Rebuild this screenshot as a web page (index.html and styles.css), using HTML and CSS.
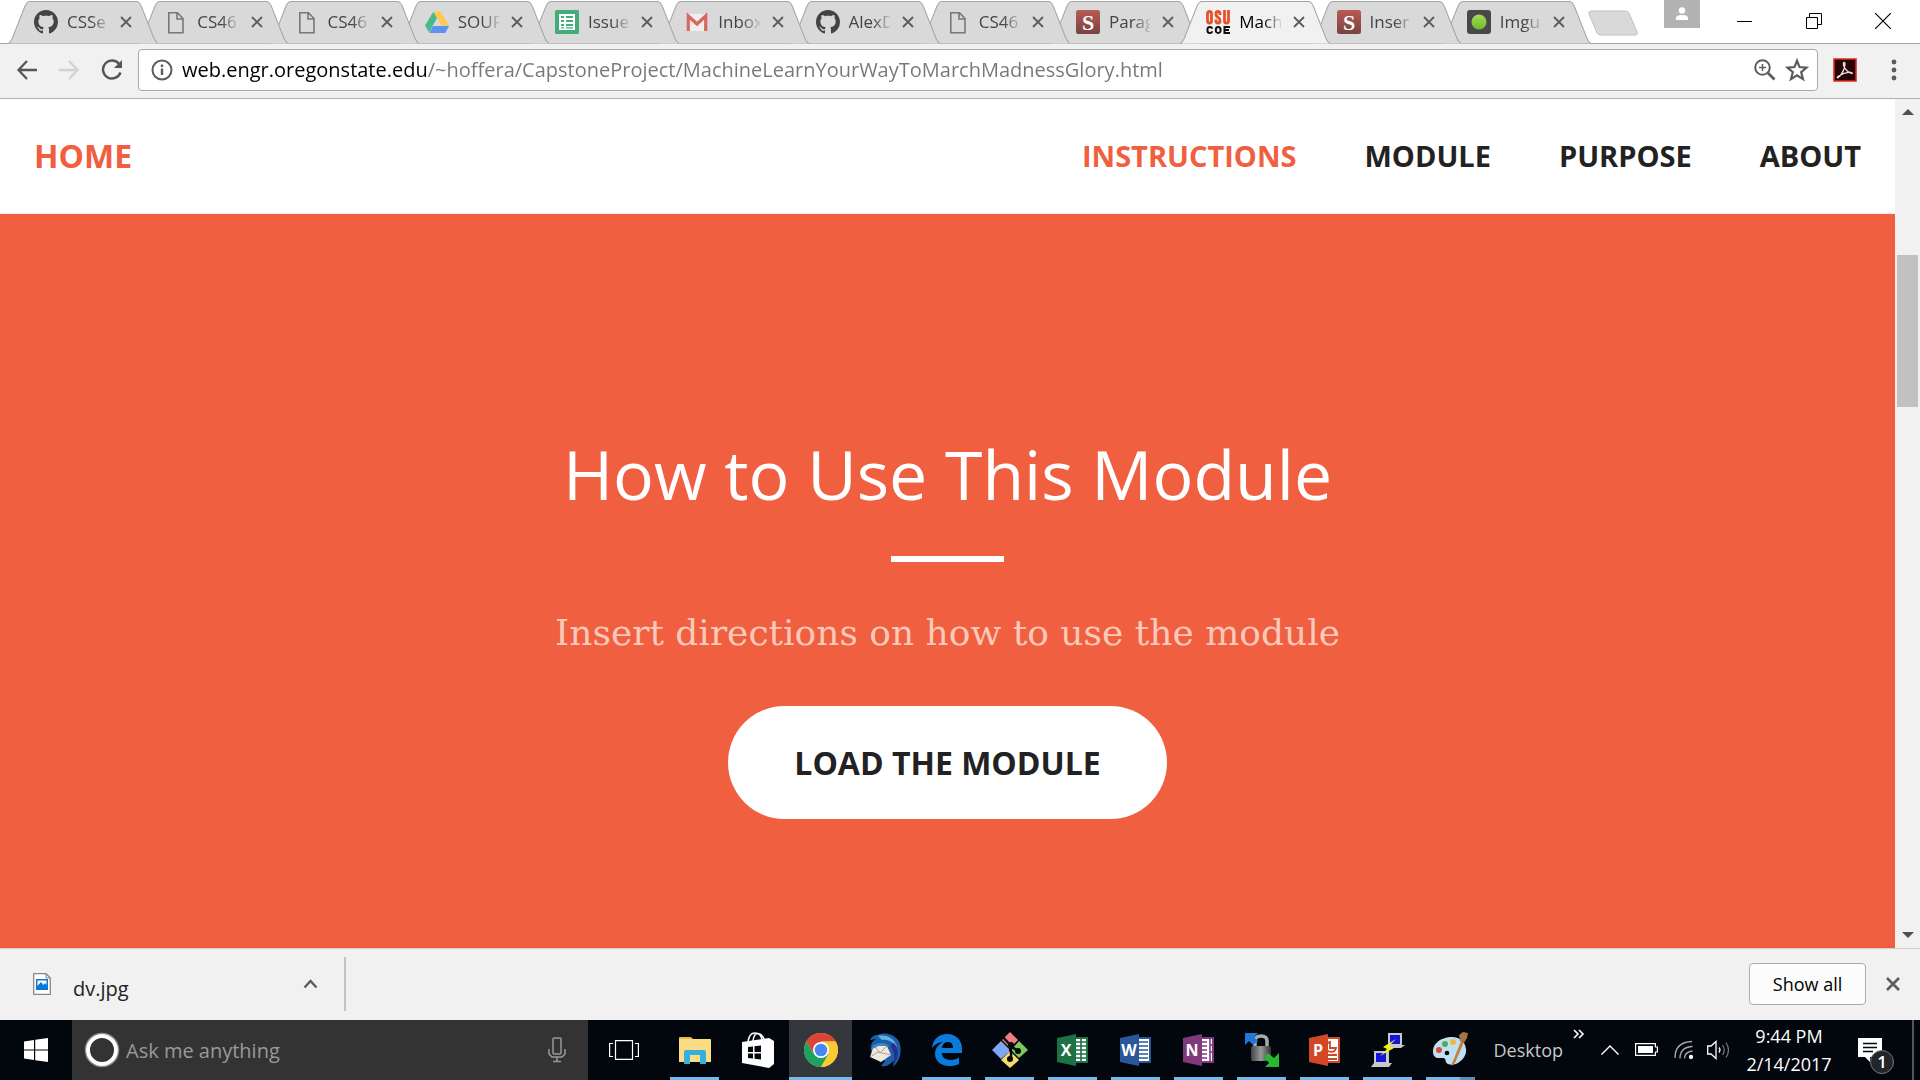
FILE: index.html
```html
<!DOCTYPE html>
<html lang="en">
<head>
<meta charset="utf-8">
<title>Machine Learn Your Way To March Madness Glory</title>
<link rel="stylesheet" href="styles.css">
</head>
<body>
<svg class="defs" aria-hidden="true">
  <symbol id="tab" viewBox="0 0 150 44" preserveAspectRatio="none"><path d="M0 43.500C2 43 3 41 4 39L17 6Q19 1.500 22 1.500H128Q131 1.500 133 6L146 39C147 41 148 43 150 43.500"/></symbol>
  <symbol id="close" viewBox="0 0 12 12"><path d="M1 1L11 11M11 1L1 11" fill="none" stroke="#5c5c5c" stroke-width="1.800"/></symbol>
  <symbol id="github" viewBox="0 0 16 16"><path fill="#444" d="M8 0C3.580 0 0 3.580 0 8c0 3.540 2.290 6.530 5.470 7.590.4.070.55-.17.55-.38 0-.19-.01-.82-.01-1.490-2.010.37-2.530-.49-2.690-.94-.09-.23-.48-.94-.82-1.130-.28-.15-.68-.52-.01-.53.63-.01 1.080.58 1.230.82.72 1.210 1.870.87 2.330.66.070-.52.28-.87.51-1.070-1.780-.2-3.640-.89-3.640-3.950 0-.87.31-1.590.82-2.150-.08-.2-.36-1.020.08-2.120 0 0 .67-.21 2.200.82.64-.18 1.320-.27 2-.27s1.360.09 2 .27c1.530-1.040 2.200-.82 2.200-.82.44 1.100.16 1.920.08 2.120.51.56.82 1.270.82 2.150 0 3.070-1.870 3.750-3.650 3.950.29.25.54.73.54 1.480 0 1.070-.01 1.930-.01 2.200 0 .21.15.46.55.38A8.010 8.010 0 0 0 16 8c0-4.420-3.580-8-8-8z"/></symbol>
  <symbol id="page" viewBox="0 0 24 24"><path d="M4.800 2.800H13.500L19 8.500V22.700H4.800ZM13 3V9H19" fill="none" stroke="#777" stroke-width="1.600"/></symbol>
  <symbol id="drive" viewBox="0 0 24 24"><path fill="#fdc94f" d="M8.500 1.500H15.500L24 15.500H16.500Z"/><path fill="#4cb98a" d="M8.300 1.700L12 8L4 22.500L0 15.500Z"/><path fill="#5b93ee" d="M8 16H24L20.300 23H4.200Z"/></symbol>
  <symbol id="sheet" viewBox="0 0 24 24"><rect width="24" height="24" rx="1.500" fill="#43ad78"/><path fill="#fff" d="M4 4H20V20H4Z"/><path fill="#43ad78" d="M6 6H9V8H6ZM11 6H18V8H11ZM6 10H9V12H6ZM11 10H18V12H11ZM6 14H9V16H6ZM11 14H18V16H11ZM6 17.300H9V18.600H6ZM11 17.300H18V18.600H11Z"/></symbol>
  <symbol id="gmail" viewBox="0 0 24 24"><path fill="#eee" d="M2 4H22V21H2Z"/><path d="M3.300 21V6L12 14L20.700 6V21" fill="none" stroke="#d9675f" stroke-width="3.200"/></symbol>
  <symbol id="scribd" viewBox="0 0 24 24"><linearGradient id="red" x2="0" y2="1"><stop stop-color="#b95a55"/><stop offset="1" stop-color="#754441"/></linearGradient><rect width="24" height="24" rx="2.500" fill="url(#red)"/><text x="12" y="19.500" text-anchor="middle" font-family="Liberation Serif, serif" font-weight="700" font-size="22" fill="#fff">S</text></symbol>
  <symbol id="imgur" viewBox="0 0 24 24"><linearGradient id="lime" x2="0" y2="1"><stop stop-color="#a2dc5a"/><stop offset="1" stop-color="#70bb28"/></linearGradient><rect width="24" height="24" rx="3" fill="#484848"/><circle cx="12" cy="12" r="7.500" fill="url(#lime)"/></symbol>
  <symbol id="osu" viewBox="0 0 24 24"><path d="M1.500 3.500Q1.500 1.500 3.500 1.500T5.500 3.500V11Q5.500 13 3.500 13T1.500 11ZM14 5V3.500Q14 1.500 12 1.500T10 3.500V4.500Q10 6 12 7.300T14 10V11Q14 13 12 13T10 11V9.500M18.500 0V11Q18.500 13 20.500 13T22.500 11V0" fill="none" stroke="#e8502a" stroke-width="2.800"/><path d="M6 18.800Q6 17 3.800 17T1.500 19V21Q1.500 23 3.800 23T6 21.200M9.800 20Q9.800 17 12.200 17T14.600 20T12.200 23T9.800 20ZM24 17H18.500V23H24M18.500 20H23" fill="none" stroke="#111" stroke-width="2"/></symbol>
  <symbol id="office-sheet" viewBox="0 0 32 32"><path d="M17 4H30V28H17Z" fill="#fff" stroke="currentColor" stroke-width="2"/><path d="M0 4L19 0V32L0 28Z" fill="currentColor"/></symbol>
</svg>

<header class="browser">
  <div class="strip">
    <nav class="tabs" aria-label="Open tabs">
      <a href="#" class="tab"><svg class="shape"><use href="#tab"/></svg><svg class="fav"><use href="#github"/></svg><span class="label">CSSe</span><svg class="x"><use href="#close"/></svg></a>
      <a href="#" class="tab"><svg class="shape"><use href="#tab"/></svg><svg class="fav"><use href="#page"/></svg><span class="label">CS46</span><svg class="x"><use href="#close"/></svg></a>
      <a href="#" class="tab"><svg class="shape"><use href="#tab"/></svg><svg class="fav"><use href="#page"/></svg><span class="label">CS46</span><svg class="x"><use href="#close"/></svg></a>
      <a href="#" class="tab"><svg class="shape"><use href="#tab"/></svg><svg class="fav"><use href="#drive"/></svg><span class="label">SOUR</span><svg class="x"><use href="#close"/></svg></a>
      <a href="#" class="tab"><svg class="shape"><use href="#tab"/></svg><svg class="fav"><use href="#sheet"/></svg><span class="label">Issue</span><svg class="x"><use href="#close"/></svg></a>
      <a href="#" class="tab"><svg class="shape"><use href="#tab"/></svg><svg class="fav"><use href="#gmail"/></svg><span class="label">Inbox</span><svg class="x"><use href="#close"/></svg></a>
      <a href="#" class="tab"><svg class="shape"><use href="#tab"/></svg><svg class="fav"><use href="#github"/></svg><span class="label">AlexD</span><svg class="x"><use href="#close"/></svg></a>
      <a href="#" class="tab"><svg class="shape"><use href="#tab"/></svg><svg class="fav"><use href="#page"/></svg><span class="label">CS46</span><svg class="x"><use href="#close"/></svg></a>
      <a href="#" class="tab"><svg class="shape"><use href="#tab"/></svg><svg class="fav"><use href="#scribd"/></svg><span class="label">Parag</span><svg class="x"><use href="#close"/></svg></a>
      <a href="#" class="tab active" aria-current="page"><svg class="shape"><use href="#tab"/></svg><svg class="fav"><use href="#osu"/></svg><span class="label">Mach</span><svg class="x"><use href="#close"/></svg></a>
      <a href="#" class="tab"><svg class="shape"><use href="#tab"/></svg><svg class="fav"><use href="#scribd"/></svg><span class="label">Inser</span><svg class="x"><use href="#close"/></svg></a>
      <a href="#" class="tab"><svg class="shape"><use href="#tab"/></svg><svg class="fav"><use href="#imgur"/></svg><span class="label">Imgu</span><svg class="x"><use href="#close"/></svg></a>
    </nav>
    <button class="new-tab" aria-label="New tab"><svg width="52" height="26" viewBox="0 0 52 26"><path d="M4 1H38Q41 1 42 3L50 22Q51 25 48 25H14Q11 25 10 23L2 4Q1 1 4 1Z" fill="#d9d9d9" stroke="#c2c2c2"/></svg></button>
    <div class="window-buttons">
      <button class="person" aria-label="Profile"><svg width="14" height="14" viewBox="0 0 14 14" fill="#fff"><circle cx="7" cy="3.500" r="3.200"/><path d="M1 13V11Q1 8 7 8T13 11V13Z"/></svg></button>
      <button class="win" aria-label="Minimize"><svg width="16" height="16"><path d="M0 8.500H15" stroke="#000"/></svg></button>
      <button class="win" aria-label="Restore"><svg width="16" height="16" fill="none" stroke="#000"><path d="M.5 4.500H11.500V15.500H.5ZM3.500 4V.5H15.500V11.500H12"/></svg></button>
      <button class="win" aria-label="Close"><svg width="16" height="16"><path d="M0 0L16 16M16 0L0 16" stroke="#000" stroke-width="1.200"/></svg></button>
    </div>
  </div>
  <div class="toolbar">
    <button aria-label="Back"><svg width="20" height="20" viewBox="0 0 20 20" fill="none" stroke="#555" stroke-width="2.300"><path d="M20 10H1.500M10 1L1.500 10L10 19"/></svg></button>
    <button aria-label="Forward"><svg width="20" height="20" viewBox="0 0 20 20" fill="none" stroke="#d2d2d2" stroke-width="2.300"><path d="M0 10H18.500M10 1L18.500 10L10 19"/></svg></button>
    <button aria-label="Reload"><svg width="22" height="22" viewBox="0 0 22 22"><path d="M18.500 5.500A9 9 0 1 0 19.500 13.500" fill="none" stroke="#555" stroke-width="2.400"/><path d="M21 1V9H13Z" fill="#555"/></svg></button>
    <form class="omnibox">
      <svg width="22" height="22" viewBox="0 0 22 22"><circle cx="11" cy="11" r="9.500" fill="none" stroke="#5c5c5c" stroke-width="2"/><path d="M11 9.500V16M11 5.500V8" stroke="#5c5c5c" stroke-width="2.400"/></svg>
      <input type="text" aria-label="Address" value="web.engr.oregonstate.edu/~hoffera/CapstoneProject/MachineLearnYourWayToMarchMadnessGlory.html">
      <svg width="22" height="22" viewBox="0 0 22 22" fill="none" stroke="#5c5c5c" stroke-width="2"><circle cx="8.500" cy="8.500" r="7.300"/><path d="M14 14L20.500 20.500" stroke-width="2.800"/><path d="M5 8.500H12M8.500 5V12" stroke-width="1.500"/></svg>
      <svg width="24" height="24" viewBox="0 0 22 22"><path d="M11 2.500L13.300 8.300L19.800 8.800L14.800 12.900L16.500 19.300L11 15.800L5.500 19.300L7.200 12.900L2.200 8.800L8.700 8.300Z" fill="none" stroke="#5c5c5c" stroke-width="2"/></svg>
    </form>
    <button class="acrobat" aria-label="Adobe Acrobat"><svg width="24" height="24" viewBox="0 0 24 24"><path d="M1 1H23V23H1Z" fill="#260406" stroke="#e02a20" stroke-width="1.600"/><path d="M5 19.500C8 18 12 11 12 6C12 3.500 10 4 10.500 7C11.500 11 16 15.500 19 15.500C20 14 13 13 5 18.500C4 19.500 4.500 20 5 19.500Z" fill="none" stroke="#e8dede" stroke-width="1.400"/></svg></button>
    <button class="more" aria-label="Menu"><svg width="6" height="22" fill="#5c5c5c"><circle cx="3" cy="3" r="2.400"/><circle cx="3" cy="11" r="2.400"/><circle cx="3" cy="19" r="2.400"/></svg></button>
  </div>
</header>

<div class="viewport">
  <main class="site">
    <header class="site-nav">
      <a class="brand" href="#home">HOME</a>
      <nav class="links" aria-label="Site">
        <a class="current" href="#instructions">INSTRUCTIONS</a>
        <a href="#module">MODULE</a>
        <a href="#purpose">PURPOSE</a>
        <a href="#about">ABOUT</a>
      </nav>
    </header>
    <section class="hero" id="instructions">
      <h1>How to Use This Module</h1>
      <hr>
      <p>Insert directions on how to use the module</p>
      <button class="load">LOAD THE MODULE</button>
    </section>
  </main>
  <div class="scrollbar" aria-hidden="true">
    <svg width="12" height="6"><path d="M0 6L6 0L12 6Z" fill="#505050"/></svg>
    <div class="track"><div class="thumb"></div></div>
    <svg width="12" height="6"><path d="M0 0L6 6L12 0Z" fill="#505050"/></svg>
  </div>
</div>

<aside class="shelf" aria-label="Downloads">
  <button class="download">
    <svg width="18" height="22" viewBox="0 0 18 22"><path d="M.7.7H13L17.300 5V21.300H.7Z" fill="#fff" stroke="#888" stroke-width="1.300"/><path d="M13 1V5H17" fill="none" stroke="#888"/><path d="M3 6H15V17H3Z" fill="#0a78d4"/><path d="M4.500 7.500H13.500V12L12 10L10.500 12L8 9L4.500 13Z" fill="#fff"/></svg>
    <span>dv.jpg</span>
    <svg class="caret" width="15" height="10"><path d="M1.500 8.500L7.500 2L13.500 8.500" fill="none" stroke="#5c5c5c" stroke-width="2.400"/></svg>
  </button>
  <button class="show-all">Show all</button>
  <button class="dismiss" aria-label="Close downloads"><svg width="14" height="14"><path d="M1 1L13 13M13 1L1 13" stroke="#5c5c5c" stroke-width="2.600"/></svg></button>
</aside>

<footer class="taskbar">
  <button class="start" aria-label="Start"><svg width="24" height="24" viewBox="0 0 24 24" fill="#fff"><path d="M0 3.400L10 2V11.400H0ZM11.200 1.800L24 0V11.400H11.200ZM0 12.600H10V22L0 20.600ZM11.200 12.600H24V24L11.200 22.200Z"/></svg></button>
  <label class="search">
    <svg width="36" height="36" viewBox="0 0 36 36"><circle cx="18" cy="18" r="16.500" fill="none" stroke="#8e8e8e" stroke-width="1.500"/><circle cx="18" cy="18" r="14" fill="none" stroke="#fff" stroke-width="4"/></svg>
    <input type="text" placeholder="Ask me anything" aria-label="Ask me anything">
    <svg width="18" height="26" viewBox="0 0 18 26" fill="none" stroke="#999" stroke-width="1.500"><rect x="5" y="1" width="8" height="16" rx="1"/><path d="M1 12V17L4 20H14L17 17V12M9 20V24M5 24.500H13"/></svg>
  </label>
  <button class="task-view" aria-label="Task view"><svg width="30" height="20" fill="none" stroke="#fff" stroke-width="1.200"><path d="M6.500.6H23.500V19.400H6.500ZM4 3.500H.6V16.500H4M26 3.500H29.400V16.500H26"/></svg></button>
  <div class="apps">
    <button class="app open" aria-label="File Explorer"><svg width="32" height="28" viewBox="0 0 32 28"><path d="M0 2Q0 1 1 1H12L15 4H0Z" fill="#e9b44a"/><path d="M0 3H31Q32 3 32 4V26H0Z" fill="#fbdc82"/><path d="M5 28V16Q5 14 7 14H25Q27 14 27 16V28H21V19H11V28Z" fill="#35aee0"/></svg></button>
    <button class="app" aria-label="Store"><svg width="32" height="36" viewBox="0 0 32 36"><path d="M6 10Q7 1 13 1T20 8M11 9Q12 1 16 1.500T22 7" fill="none" stroke="#fff" stroke-width="1.500"/><path d="M0 10L27 6L32 9V32L27 36L0 31Z" fill="#fff"/><path d="M6 15L11 14.500V20H6ZM12.500 14.300L19 13.500V20H12.500ZM6 21.500H11V26.500L6 26ZM12.500 21.500H19V27.500L12.500 26.700Z" fill="#02060d"/></svg></button>
    <button class="app open focused" aria-label="Chrome"><svg width="34" height="34" viewBox="0 0 34 34"><circle cx="17" cy="17" r="17" fill="#fbc931"/><path d="M2.300 8.500A17 17 0 0 1 31.700 8.500H17L10 21Z" fill="#db4437"/><path d="M2.300 8.500A17 17 0 0 0 17 34L24.500 21L9.800 21Z" fill="#1ca25e"/><path d="M31.700 8.500H17L24.500 21L17 34A17 17 0 0 0 31.700 8.500Z" fill="#fbc931"/><circle cx="17" cy="17" r="8" fill="#fff"/><circle cx="17" cy="17" r="6.300" fill="#4687f4"/></svg></button>
    <button class="app" aria-label="Thunderbird"><svg width="34" height="34" viewBox="0 0 34 34"><path d="M10 2C16-1 26 0 31 7C36 15 34 27 26 34C27 31 27 29 26 28C23 32 19 34 14 33L18 28L4 18C3 12 5 8 9 6L3 7C4 4 7 2 10 2Z" fill="#1c5fa8"/><path d="M11 3C20 1 28 6 30 14C26 9 21 6 15 7Z" fill="#63b1df"/><path d="M27 10C33 18 31 26 26 33C28 24 28 18 23 13Z" fill="#252f8c"/><path d="M7 12L20 13L24 22L14 29L3 24Z" fill="#eee9df"/><path d="M7 12L13 20L20 13M3 24L11 19L24 22" fill="none" stroke="#aaa092"/><path d="M4 16C8 9 17 8 24 14C18 12 12 12 8 15Z" fill="#3d86c6"/></svg></button>
    <button class="app open" aria-label="Edge"><svg width="30" height="32" viewBox="0 0 30 32"><path d="M0 14C1 5 7 0 15 0C25 0 30 7 30 15V19H10C10 24 14 26 19 26C22 26 25 25 27 23.500V30C24 31.500 21 32 17 32C9 32 3 27 3 20C3 14 7 10 11 8C7 8 3 10 0 14ZM10 14H21C21 10 19 8 16 8C13 8 10.500 10 10 14Z" fill="#0a7bdc"/></svg></button>
    <button class="app open" aria-label="Git"><svg width="36" height="36" viewBox="0 0 36 36"><path d="M18 0L26 8L18 16L10 8Z" fill="#f27e83"/><path d="M9 9L17 17V20L9 27L0 18Z" fill="#7da7f4"/><path d="M27 9L36 18L27 26L19 18Z" fill="#7dc95c"/><path d="M18 19L27 28L18 36L9 28Z" fill="#f7dc6a"/><path d="M10 4L19 14V27M19 14L27 20" fill="none" stroke="#08080a" stroke-width="2.500"/><g fill="#08080a"><circle cx="19" cy="13" r="3"/><circle cx="18" cy="27" r="3"/><circle cx="26" cy="19" r="3"/></g></svg></button>
    <button class="app open excel" aria-label="Excel"><svg width="32" height="32" viewBox="0 0 32 32"><use href="#office-sheet"/><path d="M19 8H29M19 12H29M19 16H29M19 20H29M19 24H29M24 5V27" stroke="currentColor" stroke-width="1.600"/><text x="9" y="22" class="glyph">X</text></svg></button>
    <button class="app open word" aria-label="Word"><svg width="32" height="32" viewBox="0 0 32 32"><use href="#office-sheet"/><path d="M19 8H28M19 12H28M19 16H28M19 20H28M19 24H28" stroke="currentColor" stroke-width="1.600"/><text x="9" y="22" class="glyph">W</text></svg></button>
    <button class="app open onenote" aria-label="OneNote"><svg width="32" height="32" viewBox="0 0 32 32"><use href="#office-sheet"/><path d="M19 8H24M19 12H24M19 16H24M19 20H24M19 24H24M27 5V27M27 11H31M27 18H31" stroke="currentColor" stroke-width="1.600"/><text x="9" y="22" class="glyph">N</text></svg></button>
    <button class="app open" aria-label="WinSCP"><svg width="36" height="36" viewBox="0 0 36 36"><path d="M11 16V9Q11 4 17 4T23 9V16" fill="none" stroke="#aaa" stroke-width="3.500"/><linearGradient id="steel"><stop stop-color="#444"/><stop offset=".5" stop-color="#999"/><stop offset="1" stop-color="#333"/></linearGradient><rect x="7" y="14" width="20" height="15" rx="2" fill="url(#steel)"/><path d="M1 1H14L10 5L14 9L9 13L5 9L1 13Z" fill="#1e78dc"/><path d="M35 35H21L25 31L20 25L24 21L30 26L35 21Z" fill="#26b82d"/></svg></button>
    <button class="app open powerpoint" aria-label="PowerPoint"><svg width="32" height="32" viewBox="0 0 32 32"><use href="#office-sheet"/><path d="M19 21H28M19 25H28M21 8A5 5 0 1 0 27 14H21Z" fill="none" stroke="currentColor" stroke-width="1.800"/><text x="9" y="22" class="glyph">P</text></svg></button>
    <button class="app open" aria-label="PuTTY"><svg width="34" height="34" viewBox="0 0 34 34"><path d="M17 0H31V12H34L30 15H14L17 12ZM3 18H18V30H21L18 34H0L3 30Z" fill="#c9c9c9"/><path d="M19 2H29V11H19ZM5 20H15V29H5Z" fill="#1414dc"/><path d="M25 6L12 14L16 16L9 23L23 15L18 13Z" fill="#f5ee22"/></svg></button>
    <button class="app open stacked" aria-label="Paint"><svg width="36" height="36" viewBox="0 0 36 36"><path d="M17 5C27 4 34 11 33 20C32 28 22 35 15 32C11 30 14 26 10 26C6 26 1 27 0 21C-1 12 7 6 17 5Z" fill="#bfe0f2"/><circle cx="14" cy="21" r="2.300" fill="#02060d"/><circle cx="6" cy="18" r="3" fill="#d94b3c"/><circle cx="12" cy="12" r="3" fill="#4fae55"/><circle cx="20" cy="10" r="3" fill="#f2b63c"/><path d="M18 34L28 9L31 10L22 31Z" fill="#c9803d"/><path d="M27 9L26 3L30 0L35 1L34 6L31 11Z" fill="#a77247"/></svg></button>
  </div>
  <div class="tray">
    <span class="desktop">Desktop</span>
    <svg class="chevrons" width="12" height="10"><path d="M1 1L5 5L1 9M6 1L10 5L6 9" fill="none" stroke="#fff" stroke-width="1.600"/></svg>
    <svg class="up" width="18" height="10"><path d="M.5 9.500L9 1L17.500 9.500" fill="none" stroke="#fff" stroke-width="1.400"/></svg>
    <svg class="battery" width="24" height="14"><path d="M.6.6H20.400V4H22.400V9H20.400V12.400H.6Z" fill="none" stroke="#fff" stroke-width="1.200"/><path d="M3 3H18V10H3Z" fill="#fff"/></svg>
    <svg class="wifi" width="20" height="20" fill="none" stroke="#aaa" stroke-width="1.300"><path d="M1 18Q1 2 18 1.500M6 18.500Q6 7 18.500 6.500M10.500 18.500Q10.500 12 18.500 11"/><circle cx="17" cy="17" r="1.500" fill="#fff" stroke="#fff"/></svg>
    <svg class="volume" width="24" height="20" fill="none" stroke="#fff" stroke-width="1.300"><path d="M.7 6H4L9 1.500V18.500L4 14H.7Z"/><path d="M12 7.500Q14 10 12 12.500"/><path d="M15.500 5Q19 10 15.500 15M19 2.500Q24 10 19 17.500" stroke="#777"/></svg>
    <time class="clock" datetime="2017-02-14T21:44"><span>9:44 PM</span><span>2/14/2017</span></time>
    <button class="notices" aria-label="Notifications"><svg width="24" height="24"><path d="M0 0H24V19H12V24L7 19H0Z" fill="#fff"/><path d="M5 5.500H19M5 9.500H19M5 13.500H15" stroke="#02060d" stroke-width="1.400"/></svg><span class="badge">1</span></button>
    <div class="peek"></div>
  </div>
</footer>
</body>
</html>
```
FILE: styles.css
```css
* { box-sizing: border-box; }
body {
  margin: 0;
  min-height: 100vh;
  display: flex;
  flex-direction: column;
  font-family: "Open Sans", "Noto Sans", sans-serif;
  background: #f1f1f1;
  color: #222;
}
button { border: 0; padding: 0; margin: 0; background: none; font: inherit; color: inherit; }
input { border: 0; padding: 0; outline: 0; background: none; font: inherit; min-width: 0; }
a { text-decoration: none; color: inherit; }
svg { display: block; flex: none; }
.defs { position: absolute; width: 0; height: 0; }

/* Tab strip */
.strip { display: flex; height: 44px; background: #fff; border-bottom: 1px solid #a4a4a4; }
.tabs { display: flex; flex: 0 1 1583px; margin-left: 8px; height: 44px; min-width: 0; isolation: isolate; }
.tab {
  position: relative;
  flex: 1 1 0;
  min-width: 0;
  height: 44px;
  display: flex;
  align-items: center;
  padding: 0 26px 0 26px;
  margin-left: -20px;
  font-size: 17px;
  color: #444;
}
.tab:first-child { margin-left: 0; }
.tab:nth-child(1) { z-index: 12; }
.tab:nth-child(2) { z-index: 11; }
.tab:nth-child(3) { z-index: 10; }
.tab:nth-child(4) { z-index: 9; }
.tab:nth-child(5) { z-index: 8; }
.tab:nth-child(6) { z-index: 7; }
.tab:nth-child(7) { z-index: 6; }
.tab:nth-child(8) { z-index: 5; }
.tab:nth-child(9) { z-index: 4; }
.tab:nth-child(11) { z-index: 2; }
.tab:nth-child(12) { z-index: 1; }
.tab.active { z-index: 20; color: #000; }
.shape { position: absolute; inset: 0; width: 100%; height: 44px; z-index: -1; fill: #d9d9d9; stroke: #a4a4a4; }
.active .shape { fill: #f1f1f1; }
.fav { width: 24px; height: 24px; margin-right: 9px; }
.label {
  flex: 1;
  min-width: 0;
  overflow: hidden;
  white-space: nowrap;
  line-height: 24px;
  -webkit-mask-image: linear-gradient(90deg, #000 24px, transparent 44px);
  mask-image: linear-gradient(90deg, #000 24px, transparent 44px);
}
.x { width: 12px; height: 12px; margin-left: 12px; }
.new-tab { align-self: flex-start; margin-top: 10px; margin-left: -4px; }
.window-buttons { display: flex; margin-left: auto; padding-right: 3px; }
.person { width: 36px; height: 28px; background: #b3b3b3; display: grid; place-items: center; margin-right: 10px; }
.win { width: 69px; height: 41px; display: grid; place-items: center; }

/* Address row */
.toolbar { display: flex; align-items: center; height: 55px; padding: 0 23px 3px 17px; border-bottom: 1px solid #b0b0b0; }
.toolbar button + button { margin-left: 22px; }
.omnibox {
  flex: 1;
  display: flex;
  align-items: center;
  gap: 9px;
  height: 42px;
  margin: 0 15px;
  padding: 0 8px 0 12px;
  background: #fff;
  border: 1px solid #a9a9a9;
  border-radius: 4px;
}
.omnibox input {
  flex: 1;
  height: 38px;
  font-size: 20px;
  color: #777;
  background: linear-gradient(90deg, #000 246px, #777 246px);
  -webkit-background-clip: text;
  background-clip: text;
  -webkit-text-fill-color: transparent;
}
.toolbar .more { margin-left: 34px; }

/* Page */
.viewport { flex: 1; display: flex; }
.site { flex: 1; display: flex; flex-direction: column; background: #fff; }
.site-nav {
  display: flex;
  justify-content: space-between;
  align-items: center;
  height: 115px;
  padding: 0 34px 2px;
  font-size: 29px;
  font-weight: 700;
  border-bottom: 1px solid #ececec;
}
.brand { color: #f05f40; font-size: 32px; }
.links { display: flex; gap: 68px; }
.current { color: #f05f40; }
.hero {
  flex: 1;
  display: flex;
  flex-direction: column;
  align-items: center;
  padding: 222px 34px 128px;
  background: #f05f40;
  color: #fff;
}
.hero h1 { margin: 0; font-size: 68px; font-weight: 400; line-height: 76px; }
.hero hr { width: 113px; height: 6px; margin: 44px 0; border: 0; background: #fff; }
.hero p { margin: 0; font-family: "DejaVu Serif", serif; font-size: 36px; line-height: 54px; color: #fbc8ba; }
.load {
  margin-top: 46px;
  height: 113px;
  padding: 0 66px;
  border-radius: 57px;
  background: #fff;
  color: #222;
  font-size: 32px;
  font-weight: 700;
}
.scrollbar { width: 25px; display: flex; flex-direction: column; align-items: center; padding: 10px 0; background: #f1f1f1; }
.track { flex: 1; width: 21px; padding-top: 140px; }
.thumb { height: 152px; background: #c1c1c1; }

/* Downloads */
.shelf { display: flex; align-items: center; height: 72px; padding: 0 20px 2px 0; border-top: 1px solid #d0d0d0; }
.download { display: flex; align-items: center; width: 346px; height: 54px; padding: 0 26px 0 33px; border-right: 2px solid #c2c2c2; font-size: 20px; }
.download span { margin-left: 22px; padding-top: 10px; }
.caret { margin-left: auto; }
.show-all { width: 117px; height: 42px; margin-left: auto; border: 1px solid #acacac; border-radius: 4px; background: #fcfcfc; color: #000; font-size: 18px; }
.dismiss { margin-left: 20px; }

/* Taskbar */
.taskbar { display: flex; height: 60px; background: #02060d; color: #fff; }
.start { width: 72px; display: grid; place-items: center; }
.search { display: flex; align-items: center; flex: 0 1 516px; padding: 0 22px 0 12px; background: #333; font-size: 20px; }
.search input { flex: 1; height: 40px; margin-left: 6px; color: #fff; }
.search input::placeholder { color: #999; opacity: 1; }
.task-view { width: 72px; display: grid; place-items: center; margin-right: 3px; }
.apps { display: flex; }
.app { position: relative; width: 63px; height: 60px; display: grid; place-items: center; }
.open::after { content: ""; position: absolute; left: 7px; right: 7px; bottom: 0; height: 3px; background: #76b9ed; }
.focused { background: #34373c; }
.focused::after { left: 0; right: 0; }
.stacked::after { background: linear-gradient(90deg, #76b9ed 34px, #5b8db8 34px); }
.excel { color: #1e7145; }
.word { color: #2b579a; }
.onenote { color: #80397b; }
.powerpoint { color: #d24726; }
.glyph { fill: #fff; font-weight: 700; font-size: 16px; text-anchor: middle; }
.tray { display: flex; align-items: center; margin-left: auto; font-size: 18px; }
.desktop { color: #c8c8c8; }
.chevrons { margin: 0 16px 32px 10px; }
.battery { margin-left: 16px; }
.wifi { margin-left: 15px; }
.volume { margin-left: 13px; }
.clock { display: flex; flex-direction: column; align-items: center; width: 96px; margin-left: 10px; line-height: 28px; }
.notices { position: relative; margin-left: 21px; }
.badge { position: absolute; left: 12px; top: 12px; width: 24px; height: 24px; border: 1px solid #777; border-radius: 50%; background: #22252a; font-size: 17px; font-weight: 600; line-height: 22px; text-align: center; }
.peek { width: 8px; height: 60px; margin-left: 30px; border-left: 2px solid #555; }
```
